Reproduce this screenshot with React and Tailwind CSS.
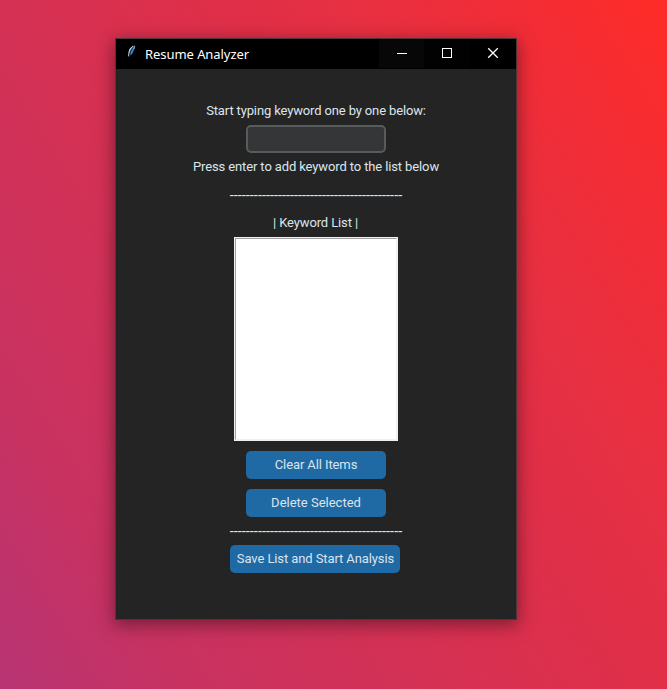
const DASHES = "-".repeat(43);

function Feather() {
  return (
    <svg width="16" height="16" viewBox="0 0 16 16" fill="none">
      <path d="M9 2.2C7 3.6 5.4 5.8 5 8.4L4.7 12.4" stroke="#c3def6" strokeWidth="1.1" />
      <path d="M10.6 1.6C10.6 4.8 9.6 8.6 6.8 11.4L6 9.2C6.8 6.4 8.2 3.6 10.6 1.6Z" fill="#3f86d2" />
      <path d="M9.4 2.8L6.8 7.6L5.4 11.8" stroke="#10203a" strokeWidth="0.7" />
      <path d="M10.3 1.6C10.5 2.8 10.3 3.8 9.9 5.2" stroke="#9ccaf4" strokeWidth="0.9" />
    </svg>
  );
}

function Label({ children, className = "tracking-[-0.12px]" }) {
  return (
    <div className={`flex h-7 items-center justify-center whitespace-nowrap text-[#dce4ee] ${className}`}>
      <span>{children}</span>
    </div>
  );
}

function Button({ children, className = "" }) {
  return (
    <button className={`flex h-7 items-center justify-center whitespace-nowrap rounded-[5px] bg-[#1f6aa5] text-[#dce4ee] ${className}`}>
      {children}
    </button>
  );
}

export default function App() {
  return (
    <div className="h-[689px] w-[667px] overflow-hidden bg-[linear-gradient(58deg,#b73474_0%,#c83261_17%,#d53154_40%,#e02f48_60%,#e73042_71%,#f42c34_88%,#ff2c27_100%)] pl-[115px] pt-[38px]">
      <div className="h-[582px] w-[402px] border border-[#4f3439] bg-[#242424] shadow-[0_4px_16px_1px_rgba(40,10,20,0.5)]">
        <div className="flex h-[30px] items-center bg-black font-['Noto_Sans',sans-serif] text-[13px] text-white">
          <div className="mb-[5px] ml-2">
            <Feather />
          </div>
          <span className="ml-[5px] mt-px flex-1 tracking-[-0.06px]">Resume Analyzer</span>
          <div className="flex h-full text-white">
            <div className="h-[29px] w-[45px] bg-[#070707]">
              <svg width="45" height="29" shapeRendering="crispEdges">
                <rect x="18" y="14" width="10" height="1" fill="currentColor" />
              </svg>
            </div>
            <div className="h-[29px] w-[46px] bg-[#020202]">
              <svg width="46" height="29" fill="none" stroke="currentColor">
                <rect x="18.5" y="9.5" width="9" height="9" />
              </svg>
            </div>
            <div className="h-[29px] w-[46px]">
              <svg width="46" height="29" fill="none" stroke="currentColor" strokeWidth="1.3">
                <path d="M18.2 9.2l9.6 9.6M27.8 9.2L18.2 18.8" />
              </svg>
            </div>
          </div>
        </div>
        <div className="flex flex-col items-center pt-7 font-['Roboto',sans-serif] text-[13px] leading-4">
          <Label className="tracking-[-0.14px]">Start typing keyword one by one below:</Label>
          <input className="h-7 w-[140px] rounded-[5px] border-2 border-[#565b5e] bg-[#343638] px-2 text-[#dce4ee] outline-none" />
          <Label>Press enter to add keyword to the list below</Label>
          <Label className="pt-0.5 text-[14.5px]">{DASHES}</Label>
          <Label className="pr-px tracking-[-0.12px]">| Keyword List |</Label>
          <div className="h-[204px] w-[164px] border border-[#f0f0f0] bg-white">
            <div className="h-[202px] w-[162px] border border-b-[#f0f0f0] border-l-[#a0a0a0] border-r-[#f0f0f0] border-t-[#a0a0a0]" />
          </div>
          <Button className="mt-2.5 w-[140px] tracking-[-0.1px]">Clear All Items</Button>
          <Button className="mt-2.5 w-[140px]">Delete Selected</Button>
          <Label className="pt-0.5 text-[14.5px]">{DASHES}</Label>
          <Button className="mr-0.5 w-[170px] pl-px tracking-[-0.1px]">Save List and Start Analysis</Button>
        </div>
      </div>
    </div>
  );
}
